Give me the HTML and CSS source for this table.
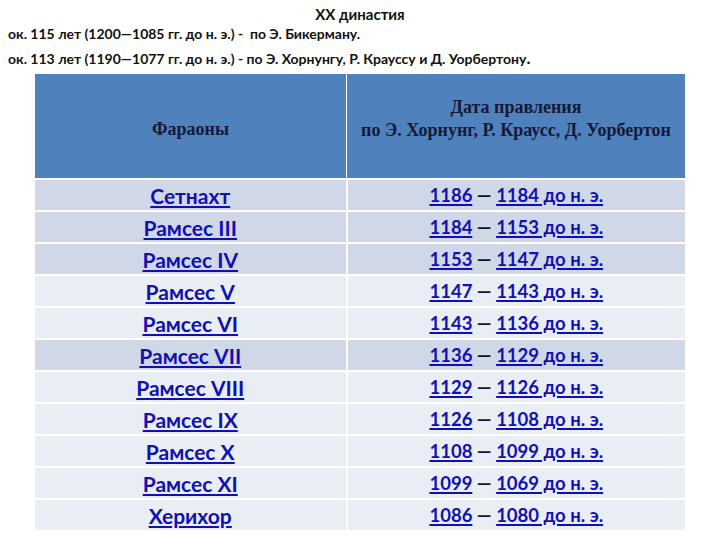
FILE: index.html
```html
<!DOCTYPE html>
<html lang="ru">
<head>
<meta charset="utf-8">
<link rel="stylesheet" href="styles.css">
</head>
<body>
<div class="page">
  <div class="title">XX династия</div>
  <div class="line">ок. 115 лет (1200—1085 гг. до н. э.) -&nbsp; по Э. Бикерману.</div>
  <div class="line">ок. 113 лет (1190—1077 гг. до н. э.) - по Э. Хорнунгу, Р. Крауссу и Д. Уорбертону<span class="big">.</span></div>
  <table class="dyn">
    <thead>
      <tr>
        <th class="c1">Фараоны</th>
        <th class="c2">Дата правления<br>по Э. Хорнунг, Р. Краусс, Д. Уорбертон</th>
      </tr>
    </thead>
    <tbody>
      <tr class="dark"><td><a>Сетнахт</a></td><td><a>1186</a> — <a>1184 до н. э.</a></td></tr>
      <tr class="dark"><td><a>Рамсес III</a></td><td><a>1184</a> — <a>1153 до н. э.</a></td></tr>
      <tr class="dark"><td><a>Рамсес IV</a></td><td><a>1153</a> — <a>1147 до н. э.</a></td></tr>
      <tr class="light"><td><a>Рамсес V</a></td><td><a>1147</a> — <a>1143 до н. э.</a></td></tr>
      <tr class="light"><td><a>Рамсес VI</a></td><td><a>1143</a> — <a>1136 до н. э.</a></td></tr>
      <tr class="dark"><td><a>Рамсес VII</a></td><td><a>1136</a> — <a>1129 до н. э.</a></td></tr>
      <tr class="light"><td><a>Рамсес VIII</a></td><td><a>1129</a> — <a>1126 до н. э.</a></td></tr>
      <tr class="light"><td><a>Рамсес IX</a></td><td><a>1126</a> — <a>1108 до н. э.</a></td></tr>
      <tr class="light"><td><a>Рамсес X</a></td><td><a>1108</a> — <a>1099 до н. э.</a></td></tr>
      <tr class="light"><td><a>Рамсес XI</a></td><td><a>1099</a> — <a>1069 до н. э.</a></td></tr>
      <tr class="light"><td><a>Херихор</a></td><td><a>1086</a> — <a>1080 до н. э.</a></td></tr>
    </tbody>
  </table>
</div>
</body>
</html>
```
FILE: styles.css
```css
html, body {
  margin: 0;
  padding: 0;
  background: #ffffff;
}
.page {
  width: 720px;
  height: 540px;
  overflow: hidden;
  font-family: Lato, "Liberation Sans", sans-serif;
  color: #111111;
}
.title {
  text-align: center;
  font-size: 15px;
  font-weight: 700;
  line-height: 16px;
  padding-top: 6px;
}
.line {
  font-size: 14px;
  font-weight: 700;
  line-height: 24px;
  padding-left: 8px;
}
.big {
  font-size: 17px;
}
.dyn {
  margin: 3px 0 0 35px;
  width: 650px;
  border-collapse: collapse;
  table-layout: fixed;
}
.dyn th {
  background: #4f81bd;
  font-family: "Liberation Serif", serif;
  font-weight: 700;
  font-size: 18px;
  line-height: 23px;
  color: #141a36;
  padding: 0;
  text-align: center;
  vertical-align: middle;
}
.dyn th.c1 {
  width: 311px;
  border-right: 1px solid #ffffff;
  padding-top: 6px;
  height: 98px;
}
.dyn th.c2 {
  padding-bottom: 14px;
  height: 90px;
}
.dyn td {
  height: 30px;
  padding: 0;
  text-align: center;
  vertical-align: middle;
  border-top: 2px solid #ffffff;
  font-size: 18.5px;
  font-weight: 700;
  color: #111133;
}
.dyn td:first-child {
  border-right: 2px solid #ffffff;
  font-size: 21px;
}
.dyn tr.dark td {
  background: #d0d8e8;
}
.dyn tr.light td {
  background: #e9edf4;
}
.dyn a {
  color: #1010b4;
  text-decoration: underline;
  text-decoration-thickness: 2px;
  text-underline-offset: 2px;
}
```
